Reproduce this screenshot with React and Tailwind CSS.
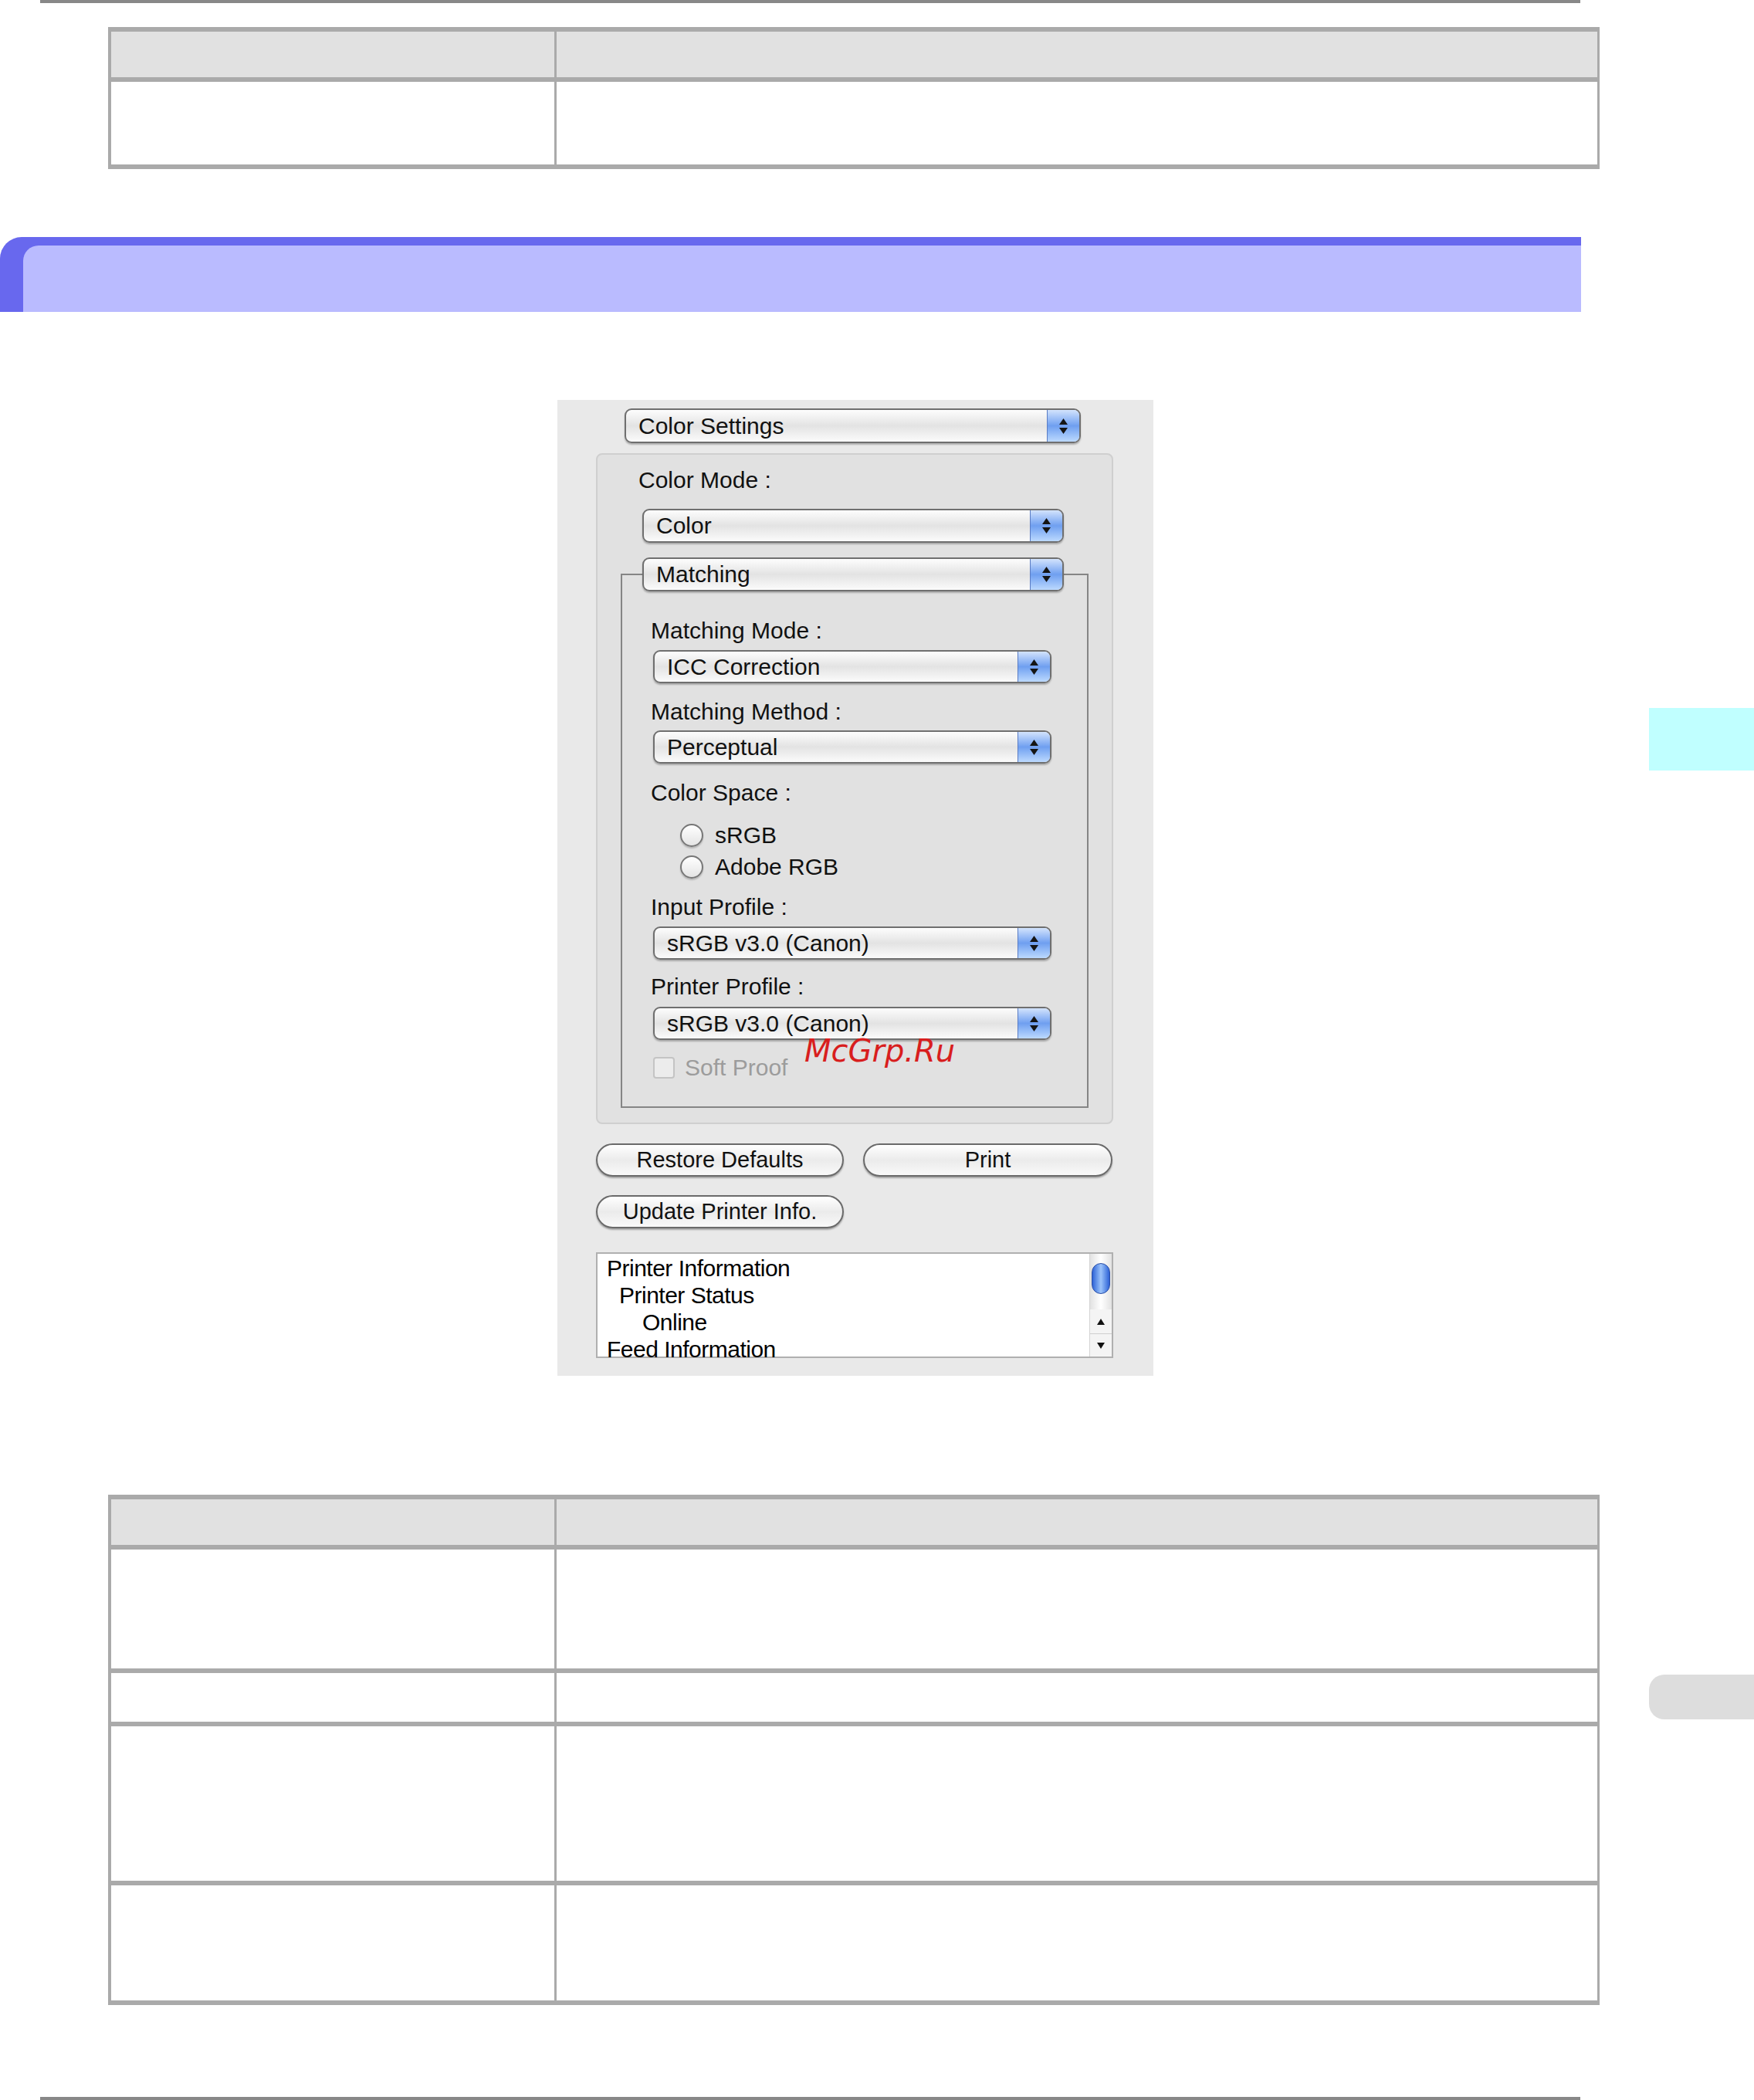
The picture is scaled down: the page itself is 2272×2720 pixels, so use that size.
import React from "react";

const table1 = ["h-[65px] bg-[#e1e1e1]", "h-[113px] bg-white"];
const table2 = [
  "h-[65px] bg-[#e1e1e1]",
  "h-[160px] bg-white",
  "h-[69px] bg-white",
  "h-[206px] bg-white",
  "h-[155px] bg-white",
];

const GridTable = ({ rows, className }) => (
  <div
    className={`ml-[140px] w-[1932px] border-b-[6px] border-l-[4px] border-r-[3px] border-[#aaaaaa] ${className}`}
  >
    {rows.map((row, index) => (
      <div
        key={index}
        className={`grid grid-cols-[577px_1fr] border-t-[6px] border-[#aaaaaa] ${row}`}
      >
        <div className="border-r-[3px] border-[#aaaaaa]" />
        <div />
      </div>
    ))}
  </div>
);

const Arrows = () => (
  <svg width="13" height="26" viewBox="0 0 13 26">
    <path d="M6.5 3 L12 11 H1 Z M1 15 H12 L6.5 23 Z" fill="#151515" />
  </svg>
);

const Popup = ({ label, className }) => (
  <div
    className={`flex overflow-hidden rounded-[9px] border-2 border-[#6f6f6f] bg-linear-to-b from-[#fdfdfd] via-[#e3e3e3] to-[#fbfbfb] shadow-[0_2px_2px_rgba(0,0,0,0.25)] ${className}`}
  >
    <div className="flex flex-1 items-center pl-[16px] text-[30px] leading-none text-[#111]">
      {label}
    </div>
    <div className="flex w-[42px] items-center justify-center border-l border-[#5a7cc4] bg-linear-to-b from-[#d3e3fc] via-[#6f9ff0] to-[#bcd9fe]">
      <Arrows />
    </div>
  </div>
);

const Label = ({ children, className }) => (
  <div className={`h-[36px] text-[30px] leading-[36px] text-[#111] ${className}`}>
    {children}
  </div>
);

const Radio = ({ label, className }) => (
  <div className={`flex h-[36px] items-center ${className}`}>
    <span className="ml-[75px] h-[30px] w-[30px] rounded-full border-2 border-[#777777] bg-linear-to-b from-white to-[#e4e4e4] shadow-[0_2px_2px_rgba(0,0,0,0.2)]" />
    <span className="ml-[15px] text-[30px] leading-none text-[#111]">{label}</span>
  </div>
);

const Button = ({ label, className }) => (
  <div
    className={`flex h-[43px] items-center justify-center rounded-full border-2 border-[#6a6a6a] bg-linear-to-b from-white via-[#ebebeb] to-[#f9f9f9] text-[29px] leading-none text-[#111] shadow-[0_2px_2px_rgba(0,0,0,0.3)] ${className}`}
  >
    {label}
  </div>
);

const Dialog = () => (
  <div className="relative ml-[722px] flex h-[1264px] w-[772px] flex-col bg-[#e9e9e9] pt-[11px]">
    <Popup label="Color Settings" className="ml-[87px] h-[45px] w-[591px]" />

    <div className="ml-[50px] mt-[13px] flex h-[869px] w-[670px] flex-col rounded-[8px] border-2 border-[#cfcfcf] bg-[#e1e1e1]">
      <Label className="ml-[53px] mt-[15px]">Color Mode :</Label>
      <Popup label="Color" className="ml-[58px] mt-[19px] h-[44px] w-[546px]" />
      <Popup label="Matching" className="relative z-10 ml-[58px] mt-[19px] h-[44px] w-[546px]" />

      <div className="-mt-[23px] ml-[30px] flex h-[692px] w-[606px] flex-col border-2 border-[#858585]">
        <Label className="ml-[37px] mt-[54px]">Matching Mode :</Label>
        <Popup label="ICC Correction" className="ml-[40px] mt-[7px] h-[43px] w-[516px]" />
        <Label className="ml-[37px] mt-[19px]">Matching Method :</Label>
        <Popup label="Perceptual" className="ml-[40px] mt-[6px] h-[43px] w-[516px]" />
        <Label className="ml-[37px] mt-[20px]">Color Space :</Label>
        <Radio label="sRGB" className="mt-[19px]" />
        <Radio label="Adobe RGB" className="mt-[5px]" />
        <Label className="ml-[37px] mt-[16px]">Input Profile :</Label>
        <Popup label="sRGB v3.0 (Canon)" className="ml-[40px] mt-[7px] h-[43px] w-[516px]" />
        <Label className="ml-[37px] mt-[17px]">Printer Profile :</Label>
        <Popup label="sRGB v3.0 (Canon)" className="ml-[40px] mt-[8px] h-[43px] w-[516px]" />
        <div className="ml-[40px] mt-[18px] flex h-[36px] items-center">
          <span className="h-[28px] w-[28px] rounded-[4px] border-2 border-[#c4c4c4] bg-[#ececec]" />
          <span className="ml-[13px] text-[30px] leading-none text-[#9c9c9c]">Soft Proof</span>
        </div>
      </div>
    </div>

    <div className="ml-[50px] mt-[25px] flex gap-[25px]">
      <Button label="Restore Defaults" className="w-[321px]" />
      <Button label="Print" className="w-[323px]" />
    </div>
    <Button label="Update Printer Info." className="ml-[50px] mt-[24px] w-[321px]" />

    <div className="ml-[50px] mt-[31px] flex h-[137px] w-[670px] border-2 border-[#b0b0b0] bg-white">
      <div className="flex-1 pl-[12px] pt-[1px] text-[30px] leading-[35px] tracking-[-0.5px] text-black">
        <div>Printer Information</div>
        <div className="pl-[16px]">Printer Status</div>
        <div className="pl-[46px]">Online</div>
        <div>Feed Information</div>
      </div>
      <div className="flex w-[29px] flex-col border-l border-[#d4d4d4] bg-[#f4f4f4]">
        <div className="flex h-[72px] flex-col items-center bg-linear-to-r from-[#e2e2e2] via-white to-[#e2e2e2] pt-[12px]">
          <div className="h-[40px] w-[24px] rounded-full border border-[#2b4fa6] bg-linear-to-r from-[#2f62d6] via-[#9cc3fa] to-[#2f62d6]" />
        </div>
        <div className="flex h-[31px] items-center justify-center">
          <svg width="12" height="10" viewBox="0 0 12 10">
            <path d="M6 1 L11 9 H1 Z" fill="#111" />
          </svg>
        </div>
        <div className="flex flex-1 items-center justify-center border-t border-[#d0d0d0]">
          <svg width="12" height="10" viewBox="0 0 12 10">
            <path d="M1 1 H11 L6 9 Z" fill="#111" />
          </svg>
        </div>
      </div>
    </div>

    <div className="absolute left-[320px] top-[823px] font-['DejaVu_Sans',sans-serif] text-[40px] italic leading-[40px] text-[#d81e1e]">
      McGrp.Ru
    </div>
  </div>
);

export default function App() {
  return (
    <div className="relative h-[2720px] w-[2272px] overflow-hidden bg-white font-['Liberation_Sans',Arial,sans-serif]">
      <div className="ml-[52px] h-[4px] w-[1995px] bg-[#888888]" />

      <GridTable rows={table1} className="mt-[31px]" />

      <div className="mt-[88px] h-[97px] w-[2048px] rounded-tl-[28px] bg-[#6868ee] pl-[30px] pt-[11px]">
        <div className="h-full rounded-tl-[20px] bg-[#babbff]" />
      </div>

      <div className="mt-[114px]">
        <Dialog />
      </div>

      <GridTable rows={table2} className="mt-[154px]" />

      <div className="ml-[52px] mt-[119px] h-[4px] w-[1995px] bg-[#888888]" />

      <div className="absolute right-0 top-[917px] h-[81px] w-[136px] bg-[#c0ffff]" />
      <div className="absolute right-0 top-[2169px] h-[58px] w-[136px] rounded-l-[20px] bg-[#dddddd]" />
    </div>
  );
}
